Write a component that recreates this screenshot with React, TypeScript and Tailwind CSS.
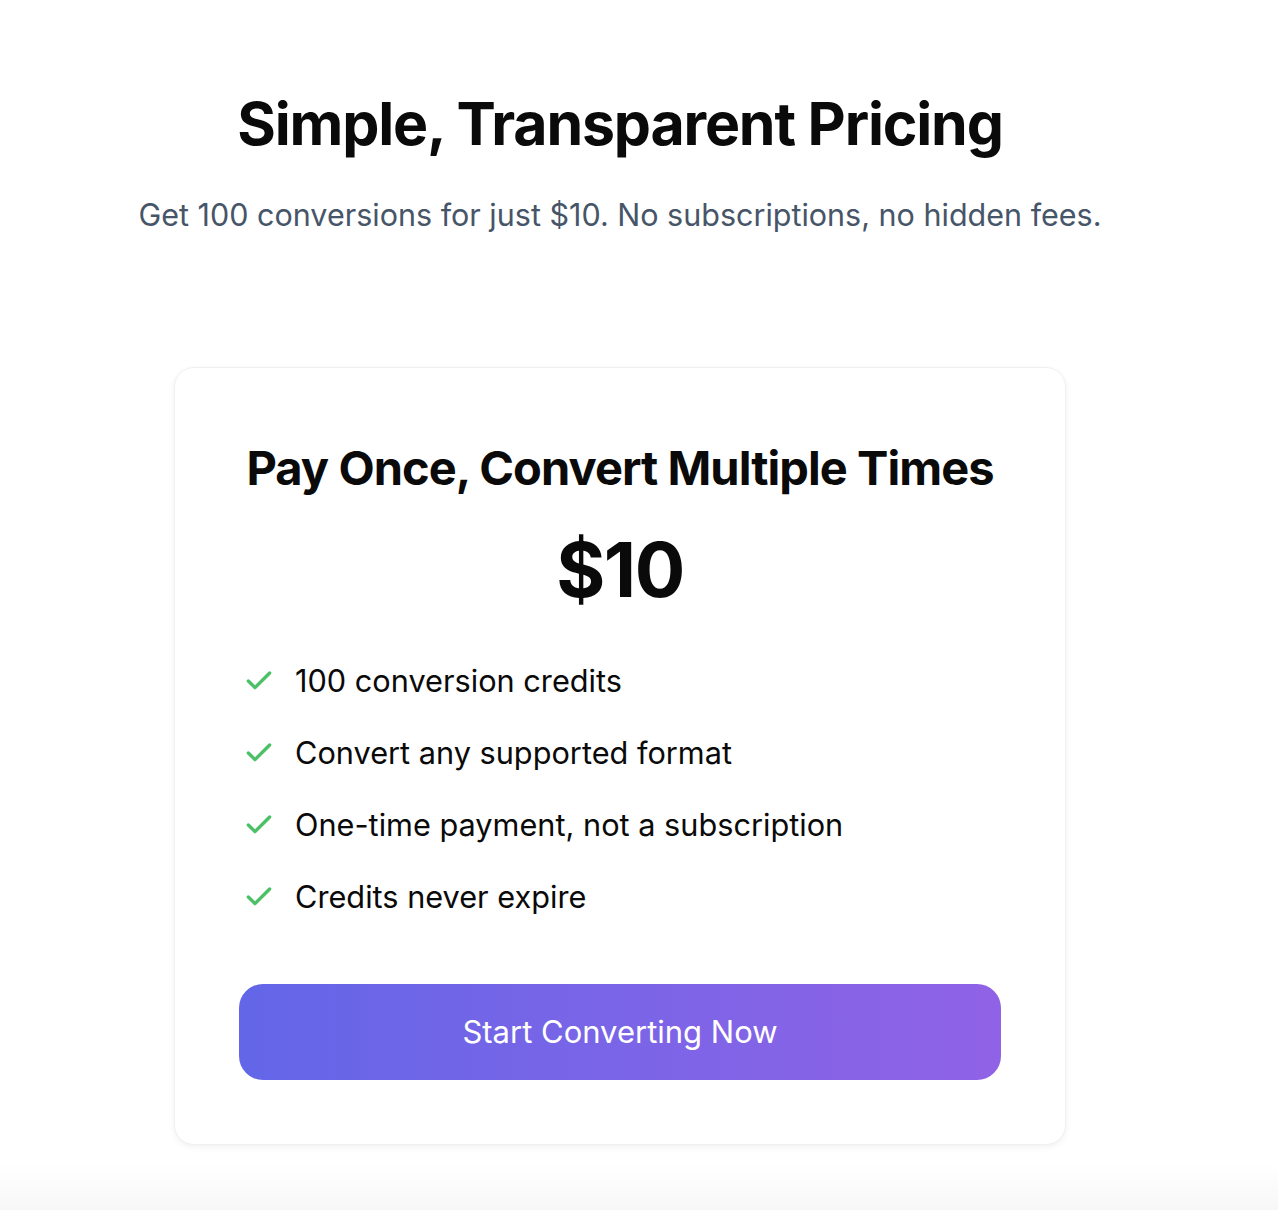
import { Check } from "lucide-react";

const features = [
  "100 conversion credits",
  "Convert any supported format",
  "One-time payment, not a subscription",
  "Credits never expire",
];

export default function App() {
  return (
    <div className="min-h-[1210px] bg-white font-['Inter',sans-serif] text-[#0a0a0a]">
      <div className="w-[1240px] pt-[92px]">
        <div className="flex flex-col items-center text-center">
          <h1 className="text-[59px] font-bold leading-[1.1] tracking-[-0.02em]">Simple, Transparent Pricing</h1>
          <p className="mt-[35px] text-[30.5px] text-[#475569]">
            Get 100 conversions for just $10. No subscriptions, no hidden fees.
          </p>
        </div>

        <div className="mx-auto mt-[129px] w-[892px] rounded-[20px] border border-[#eef0f4] bg-white px-[64px] pt-[72px] pb-[64px] shadow-[0_2px_6px_rgba(15,23,42,0.06)]">
          <h2 className="text-center text-[47px] font-bold leading-[1.2] tracking-[-0.02em]">Pay Once, Convert Multiple Times</h2>
          <div className="mt-[36px] text-center text-[75px] font-bold leading-none tracking-[-0.02em]">$10</div>

          <ul className="mt-[53px] flex flex-col gap-[30px] pl-[4px]">
            {features.map((f) => (
              <li key={f} className="flex items-center gap-[20px] text-[30.7px] leading-[42px]">
                <Check className="h-[32px] w-[32px] shrink-0 text-[#4cc066]" strokeWidth={2.5} />
                <span>{f}</span>
              </li>
            ))}
          </ul>

          <button className="mt-[66px] flex h-[96px] w-full items-center justify-center rounded-[24px] bg-gradient-to-r from-[#6366e8] to-[#9062e6] text-[31px] text-white">
            Start Converting Now
          </button>
        </div>
      </div>
      <div className="mt-[18px] h-[50px] bg-gradient-to-b from-white to-[#f7f7f8]" />
    </div>
  );
}
